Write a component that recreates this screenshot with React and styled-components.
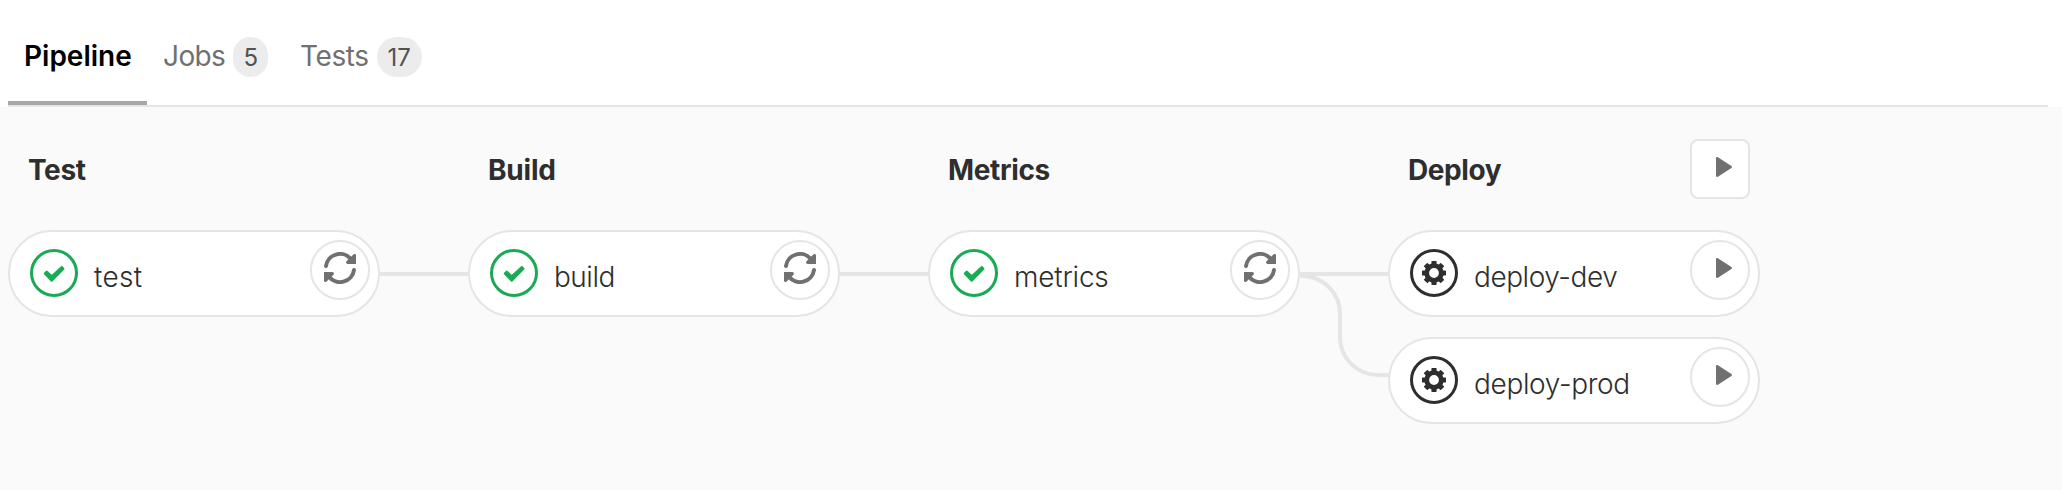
import React from "react";
import styled, { createGlobalStyle } from "styled-components";

const GlobalStyle = createGlobalStyle`
  * { box-sizing: border-box; }
  body {
    margin: 0;
    background: #fff;
    color: #2e2e2e;
    font-family: Inter, "Liberation Sans", sans-serif;
    font-size: 28px;
    -webkit-font-smoothing: antialiased;
  }
`;

const Page = styled.div`
  display: flex;
  flex-direction: column;
  width: 2062px;
  height: 490px;
  overflow: hidden;
`;

const Tabs = styled.nav`
  display: flex;
  flex: none;
  height: 107px;
  margin: 0 14px 0 8px;
  border-bottom: 2px solid #e5e5e5;
`;

const Tab = styled.a`
  display: flex;
  align-items: center;
  gap: 8px;
  height: 105px;
  width: ${(p) => p.$width}px;
  padding: 11px 0 0 16px;
  white-space: nowrap;
  color: ${(p) => (p.$active ? "#000" : "#707070")};
  font-weight: ${(p) => (p.$active ? 600 : 400)};
  letter-spacing: ${(p) => p.$tracking || 0}px;
  border-bottom: 4px solid ${(p) => (p.$active ? "#a7a7a7" : "transparent")};
`;

const Badge = styled.span`
  display: flex;
  align-items: center;
  justify-content: center;
  width: ${(p) => p.$width}px;
  height: 40px;
  margin-top: 2px;
  border-radius: 20px;
  background: #ececec;
  color: #525252;
  font-size: 24px;
  letter-spacing: 0;
`;

const Graph = styled.main`
  display: flex;
  align-items: flex-start;
  flex: 1;
  padding: 32px 8px 0;
  background: #fafafa;
`;

const Stage = styled.section`
  flex: none;
  width: 372px;
`;

const StageHeader = styled.header`
  display: flex;
  align-items: center;
  justify-content: space-between;
  height: 60px;
  margin-bottom: 31px;
  padding: 0 10px 0 20px;
`;

const StageName = styled.h2`
  margin: 0;
  padding-top: 2px;
  font-size: 28px;
  line-height: 34px;
  font-weight: 700;
  letter-spacing: ${(p) => p.$tracking}px;
`;

const Job = styled.div`
  display: flex;
  align-items: flex-start;
  height: 87px;
  margin-bottom: 20px;
  padding: 8px 8px 0 20px;
  border: 2px solid #e5e5e5;
  border-radius: 44px;
  background: #fff;
`;

const JobName = styled.span`
  flex: 1;
  margin: 20px 0 0 16px;
  line-height: 34px;
  font-weight: 300;
  white-space: nowrap;
  letter-spacing: ${(p) => p.$tracking}px;
`;

const ActionButton = styled.button`
  display: flex;
  justify-content: center;
  flex: none;
  width: 60px;
  height: 60px;
  padding: 10px 0 0;
  border: 2px solid #e5e5e5;
  border-radius: ${(p) => (p.$square ? "8px" : "50%")};
  background: #fff;
  color: #707070;
`;

const StatusSvg = styled.svg`
  flex: none;
  display: block;
  width: 48px;
  height: 48px;
  margin-top: 9px;
`;

const ActionSvg = styled.svg`
  flex: none;
  display: block;
  width: 32px;
  height: 32px;
`;

const ConnectorSvg = styled.svg`
  flex: none;
  width: 88px;
  height: 160px;
  margin-top: 91px;
  overflow: visible;
`;

const Passed = () => (
  <StatusSvg viewBox="0 0 48 48" fill="none">
    <circle cx="24" cy="24" r="22.5" stroke="#1aaa55" strokeWidth="3" />
    <path
      d="M14.7 24.6 16.9 22.6 21.7 27.2 31.8 17.9 33.5 19.8 21.7 31.7Z"
      fill="#1aaa55"
      stroke="#1aaa55"
      strokeWidth="2"
      strokeLinejoin="round"
    />
  </StatusSvg>
);

const Manual = () => (
  <StatusSvg viewBox="0 0 48 48" fill="none">
    <circle cx="24" cy="24" r="22.5" stroke="#2e2e2e" strokeWidth="3" />
    <circle cx="24" cy="24" r="7.3" stroke="#2e2e2e" strokeWidth="4.8" />
    {[0, 45, 90, 135, 180, 225, 270, 315].map((angle) => (
      <rect
        key={angle}
        x="21.4"
        y="12"
        width="5.2"
        height="4.5"
        rx="0.7"
        fill="#2e2e2e"
        transform={`rotate(${angle} 24 24)`}
      />
    ))}
  </StatusSvg>
);

const Retry = () => (
  <ActionSvg viewBox="0 0 32 32" fill="none">
    {[0, 180].map((angle) => (
      <g key={angle} transform={`rotate(${angle} 16 16)`}>
        <path d="M2 14.1A14 14 0 0 1 27.4 8" stroke="currentColor" strokeWidth="4" strokeLinecap="round" />
        <path
          d="M32 3.6V12H23.8C22 12 21.5 10 22.7 8.9L29.4 2.6C30.5 1.6 32 2.2 32 3.6Z"
          fill="currentColor"
        />
      </g>
    ))}
  </ActionSvg>
);

const Play = () => (
  <ActionSvg viewBox="0 0 32 32">
    <path d="M12 7.2C12 6.1 13 5.7 13.9 6.3L27.4 15C28.2 15.5 28.2 16.5 27.4 17L13.9 25.7C13 26.3 12 25.9 12 24.8Z" fill="currentColor" />
  </ActionSvg>
);

const Connector = ({ branch }) => (
  <ConnectorSvg viewBox="0 0 88 160" fill="none" stroke="#e5e5e5" strokeWidth="4">
    <path d="M0 44H88" />
    {branch && <path d="M0 46H2A38 38 0 0 1 40 84V107A38 38 0 0 0 78 145H89" />}
  </ConnectorSvg>
);

const stages = [
  { name: "Test", tracking: -0.4, jobs: [{ name: "test", tracking: 0.3 }] },
  { name: "Build", tracking: -0.2, jobs: [{ name: "build", tracking: -0.5 }] },
  { name: "Metrics", tracking: -0.35, jobs: [{ name: "metrics", tracking: -0.2 }] },
  {
    name: "Deploy",
    tracking: -0.4,
    manual: true,
    jobs: [
      { name: "deploy-dev", tracking: -0.45 },
      { name: "deploy-prod", tracking: -0.34 },
    ],
  },
];

export default function App() {
  return (
    <>
      <GlobalStyle />
      <Page>
        <Tabs>
          <Tab $active $width={139}>Pipeline</Tab>
          <Tab $width={137} $tracking={-0.6}>
            Jobs <Badge $width={35}>5</Badge>
          </Tab>
          <Tab $width={155} $tracking={-0.4}>
            Tests <Badge $width={45}>17</Badge>
          </Tab>
        </Tabs>
        <Graph>
          {stages.map((stage, i) => (
            <React.Fragment key={stage.name}>
              {i > 0 && <Connector branch={stage.jobs.length > 1} />}
              <Stage>
                <StageHeader>
                  <StageName $tracking={stage.tracking}>{stage.name}</StageName>
                  {stage.manual && (
                    <ActionButton $square aria-label="Play all">
                      <Play />
                    </ActionButton>
                  )}
                </StageHeader>
                {stage.jobs.map((job) => (
                  <Job key={job.name}>
                    {stage.manual ? <Manual /> : <Passed />}
                    <JobName $tracking={job.tracking}>{job.name}</JobName>
                    <ActionButton aria-label={stage.manual ? "Play" : "Retry"}>
                      {stage.manual ? <Play /> : <Retry />}
                    </ActionButton>
                  </Job>
                ))}
              </Stage>
            </React.Fragment>
          ))}
        </Graph>
      </Page>
    </>
  );
}
